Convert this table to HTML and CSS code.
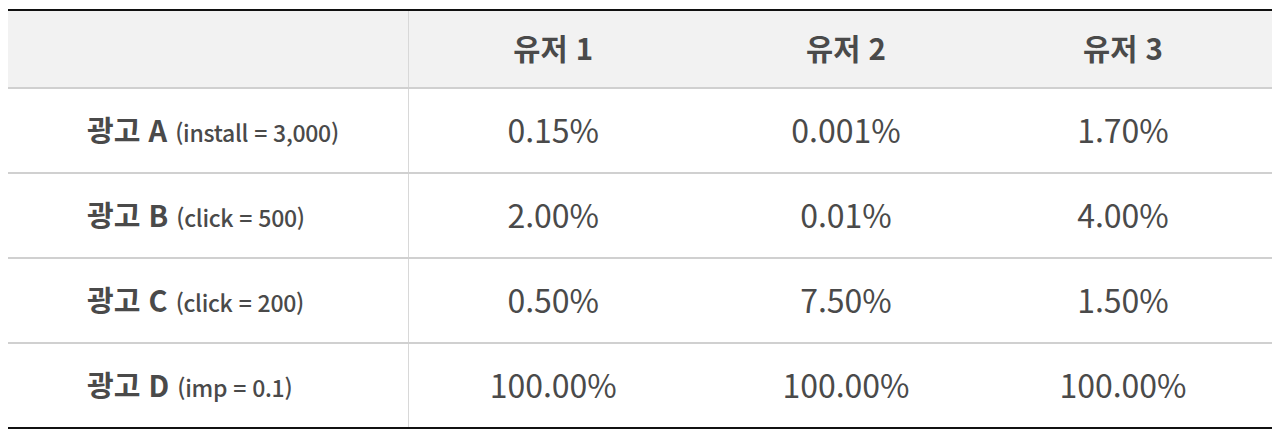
FILE: index.html
```html
<!DOCTYPE html>
<html lang="ko">
<head>
<meta charset="utf-8">
<link rel="stylesheet" href="styles.css">
</head>
<body>
<table class="ad-table">
  <colgroup>
    <col class="col-label">
    <col class="col-u1">
    <col class="col-u2">
    <col class="col-u3">
  </colgroup>
  <thead>
    <tr>
      <th class="corner"></th>
      <th>유저 1</th>
      <th>유저 2</th>
      <th class="last">유저 3</th>
    </tr>
  </thead>
  <tbody>
    <tr>
      <th class="label">광고 A <span class="sub">(install = 3,000)</span></th>
      <td>0.15%</td><td>0.001%</td><td class="last">1.70%</td>
    </tr>
    <tr>
      <th class="label">광고 B <span class="sub">(click = 500)</span></th>
      <td>2.00%</td><td>0.01%</td><td class="last">4.00%</td>
    </tr>
    <tr>
      <th class="label">광고 C <span class="sub">(click = 200)</span></th>
      <td>0.50%</td><td>7.50%</td><td class="last">1.50%</td>
    </tr>
    <tr>
      <th class="label">광고 D <span class="sub">(imp = 0.1)</span></th>
      <td>100.00%</td><td>100.00%</td><td class="last">100.00%</td>
    </tr>
  </tbody>
</table>
</body>
</html>
```

FILE: styles.css
```css
body {
  margin: 8px;
  background: #fff;
  font-family: "Noto Sans CJK KR", "Noto Sans", sans-serif;
  color: #4a4a4a;
}
.ad-table {
  width: 1264px;
  margin-top: 1px;
  border-collapse: collapse;
  table-layout: fixed;
  border-top: 2px solid #111;
  border-bottom: 2px solid #111;
}
.col-label { width: 400px; }
.col-u1 { width: 290px; }
.col-u2 { width: 296px; }
.col-u3 { width: 278px; }
.ad-table thead tr {
  height: 78px;
}
.ad-table thead th {
  background: #f2f2f2;
  font-size: 29.5px;
  font-weight: 700;
  line-height: 1.2;
  text-align: center;
  padding: 0 0 3px;
  border-bottom: 2px solid #d0d0d0;
}
.ad-table thead th.corner {
  border-right: 1px solid #d8d8d8;
}
.ad-table .last {
  padding-right: 20px;
}
.ad-table tbody tr {
  height: 85px;
}
.ad-table tbody tr + tr th,
.ad-table tbody tr + tr td {
  border-top: 2px solid #d0d0d0;
}
.ad-table th.label {
  font-size: 29px;
  font-weight: 700;
  line-height: 1.2;
  text-align: left;
  border-right: 1px solid #d8d8d8;
  padding: 0 0 3px 79px;
}
.ad-table .sub {
  font-size: 23px;
  font-weight: 500;
  letter-spacing: -0.3px;
}
.ad-table td {
  font-size: 32px;
  font-weight: 400;
  line-height: 1.2;
  text-align: center;
  padding: 0 0 3px;
}
```
